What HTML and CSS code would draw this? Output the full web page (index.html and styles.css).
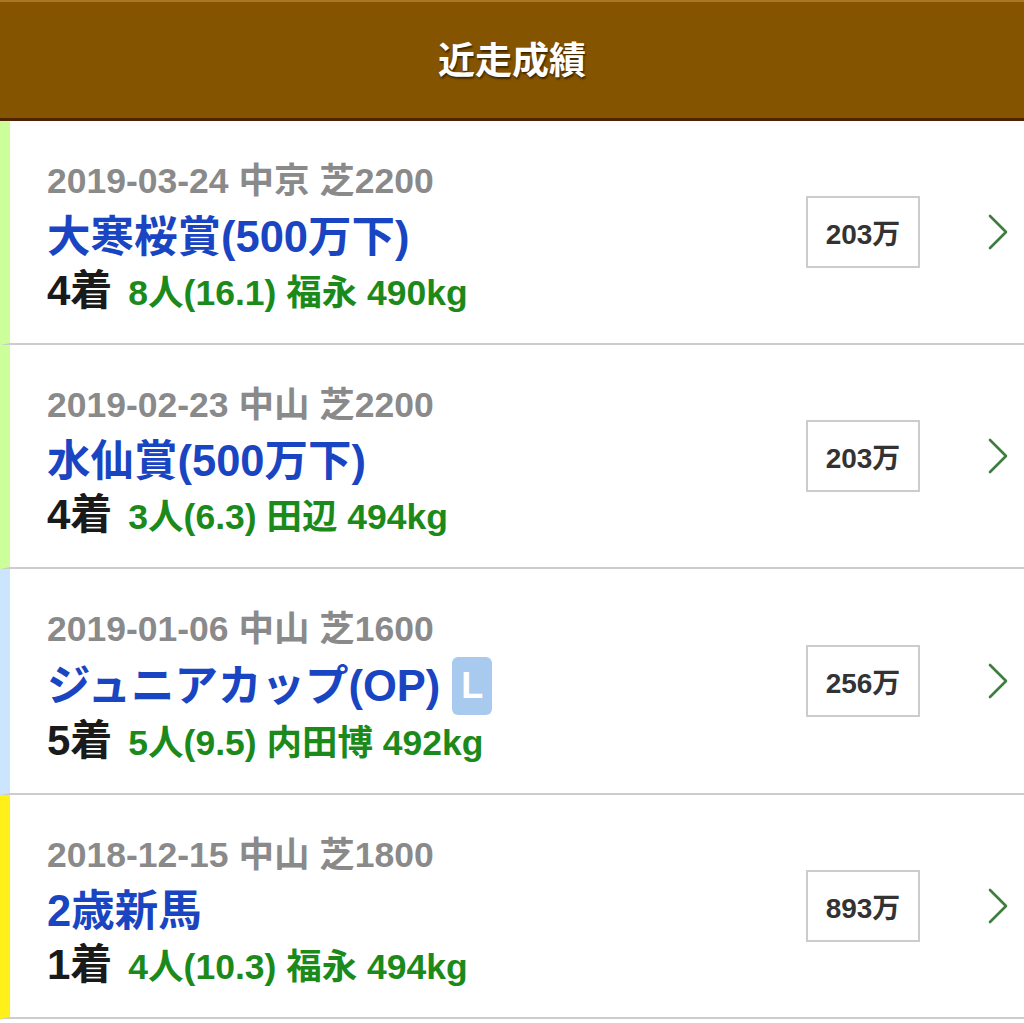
FILE: index.html
```html
<!DOCTYPE html>
<html lang="ja">
<head>
<meta charset="utf-8">
<title>近走成績</title>
<link rel="stylesheet" href="styles.css">
</head>
<body>
<header class="header"><h1 class="header-title">近走成績</h1></header>
<ul class="races">
  <li class="race bar-green">
    <div class="race-info">
      <div class="race-meta">2019-03-24 中京 芝2200</div>
      <div class="race-name">大寒桜賞(500万下)</div>
      <div class="race-result"><span class="rank">4着</span><span class="detail">8人(16.1) 福永 490kg</span></div>
    </div>
    <div class="prize">203万</div>
    <svg class="chev" viewBox="0 0 20 36" width="20" height="36"><path d="M2 2 L18 18 L2 34" fill="none" stroke="#3d7d3d" stroke-width="2.6" stroke-linecap="round" stroke-linejoin="round"/></svg>
  </li>
  <li class="race bar-green">
    <div class="race-info">
      <div class="race-meta">2019-02-23 中山 芝2200</div>
      <div class="race-name">水仙賞(500万下)</div>
      <div class="race-result"><span class="rank">4着</span><span class="detail">3人(6.3) 田辺 494kg</span></div>
    </div>
    <div class="prize">203万</div>
    <svg class="chev" viewBox="0 0 20 36" width="20" height="36"><path d="M2 2 L18 18 L2 34" fill="none" stroke="#3d7d3d" stroke-width="2.6" stroke-linecap="round" stroke-linejoin="round"/></svg>
  </li>
  <li class="race bar-blue">
    <div class="race-info">
      <div class="race-meta">2019-01-06 中山 芝1600</div>
      <div class="race-name">ジュニアカップ(OP)<span class="badge-l">L</span></div>
      <div class="race-result"><span class="rank">5着</span><span class="detail">5人(9.5) 内田博 492kg</span></div>
    </div>
    <div class="prize">256万</div>
    <svg class="chev" viewBox="0 0 20 36" width="20" height="36"><path d="M2 2 L18 18 L2 34" fill="none" stroke="#3d7d3d" stroke-width="2.6" stroke-linecap="round" stroke-linejoin="round"/></svg>
  </li>
  <li class="race bar-yellow">
    <div class="race-info">
      <div class="race-meta">2018-12-15 中山 芝1800</div>
      <div class="race-name">2歳新馬</div>
      <div class="race-result"><span class="rank">1着</span><span class="detail">4人(10.3) 福永 494kg</span></div>
    </div>
    <div class="prize">893万</div>
    <svg class="chev" viewBox="0 0 20 36" width="20" height="36"><path d="M2 2 L18 18 L2 34" fill="none" stroke="#3d7d3d" stroke-width="2.6" stroke-linecap="round" stroke-linejoin="round"/></svg>
  </li>
</ul>
</body>
</html>
```
FILE: styles.css
```css
* { box-sizing: border-box; }
html, body {
  margin: 0;
  padding: 0;
  background: #ffffff;
}
body {
  width: 1024px;
  font-family: "Liberation Sans", "Noto Sans CJK JP", sans-serif;
  font-weight: bold;
}
.header {
  height: 121px;
  background: #855400;
  border-top: 2px solid #a97820;
  border-bottom: 3px solid #4e2400;
  display: flex;
  align-items: center;
  justify-content: center;
  padding-bottom: 5px;
}
.header-title {
  margin: 0;
  color: #ffffff;
  font-size: 37px;
  font-weight: bold;
  font-family: "Noto Sans CJK JP", sans-serif;
  text-shadow: 1px 2px 2px rgba(0, 0, 0, 0.55);
}
.races {
  list-style: none;
  margin: 0;
  padding: 0;
}
.race {
  display: flex;
  align-items: center;
  border-left: 10px solid #ccff99;
  border-bottom: 2px solid #cccccc;
}
.bar-green { border-left-color: #ccff99; }
.bar-blue { border-left-color: #cce5ff; }
.bar-yellow { border-left-color: #fff01a; }
.race-info {
  flex: 1;
  padding: 32px 0 26px 37px;
}
.race-meta {
  color: #8a8a8a;
  font-size: 35.5px;
  line-height: 56px;
  height: 56px;
  white-space: nowrap;
}
.race-name {
  color: #1a45c2;
  font-size: 43.5px;
  line-height: 56px;
  min-height: 56px;
  display: flex;
  align-items: center;
  white-space: nowrap;
}
.badge-l {
  display: inline-flex;
  align-items: center;
  justify-content: center;
  width: 40px;
  height: 58px;
  margin-left: 12px;
  background: #a9caef;
  color: #ffffff;
  border-radius: 6px;
  font-size: 36px;
  line-height: 1;
  font-family: "Liberation Sans", sans-serif;
}
.race-result {
  height: 52px;
  display: flex;
  align-items: baseline;
  white-space: nowrap;
}
.rank {
  color: #1a1a1a;
  font-size: 42px;
  line-height: 52px;
}
.detail {
  color: #1b8a1b;
  font-size: 35.5px;
  line-height: 52px;
  margin-left: 16px;
}
.prize {
  width: 114px;
  height: 72px;
  border: 2px solid #cccccc;
  display: flex;
  align-items: center;
  justify-content: center;
  color: #333333;
  font-size: 28px;
  margin-right: 68px;
}
.chev {
  margin-right: 16px;
  display: block;
}
```
